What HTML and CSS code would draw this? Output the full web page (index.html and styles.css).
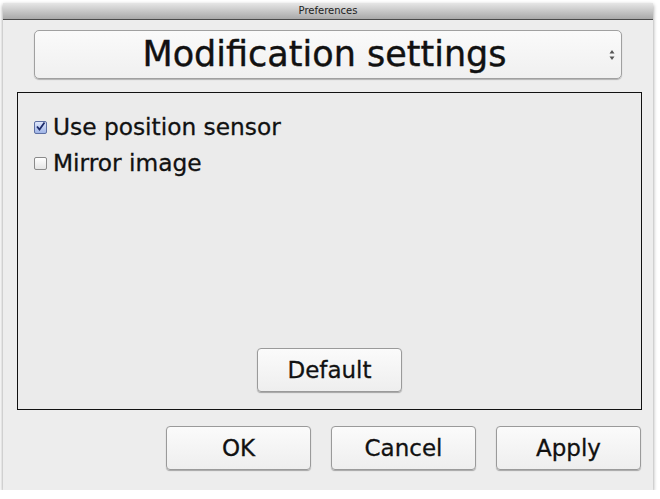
FILE: index.html
```html
<!DOCTYPE html>
<html lang="en">
<head>
  <meta charset="UTF-8">
  <title>Preferences</title>
  <link rel="stylesheet" href="styles.css">
</head>
<body>
  <div class="window">
    <div class="titlebar">Preferences</div>
    <div class="content">
      <!-- Category selector -->
      <div class="combo">
        <span class="combo-label">Modification settings</span>
        <svg class="combo-arrows" width="6" height="12" viewBox="0 0 6 12">
          <path d="M3 1 L5.5 4.5 L0.5 4.5 Z" fill="#555"/>
          <path d="M3 11 L5.5 7.5 L0.5 7.5 Z" fill="#555"/>
        </svg>
      </div>

      <!-- Settings panel -->
      <div class="panel">
        <label class="check">
          <span class="box checked">
            <svg width="13" height="13" viewBox="0 0 13 13">
              <path d="M3 6.5 L5.5 9.5 L10.5 2.5" fill="none" stroke="#1c2a6a" stroke-width="1.8"/>
            </svg>
          </span>
          Use position sensor
        </label>
        <label class="check">
          <span class="box"></span>
          Mirror image
        </label>
        <div class="panel-footer">
          <button class="btn">Default</button>
        </div>
      </div>

      <!-- Dialog buttons -->
      <div class="actions">
        <button class="btn">OK</button>
        <button class="btn">Cancel</button>
        <button class="btn">Apply</button>
      </div>
    </div>
  </div>
</body>
</html>
```

FILE: styles.css
```css
/* Basic reset */
body {
  margin: 0;
  background: #fff;
  font-family: "DejaVu Sans", sans-serif;
}
.window {
  margin: 3px 0 0 3px;
  width: 650px;
  height: 487px;
  background: #ededed;
  box-shadow: 0 2px 4px rgba(0,0,0,0.45);
  display: flex;
  flex-direction: column;
}
.titlebar {
  height: 16px;
  line-height: 16px;
  text-align: center;
  font-size: 10px;
  color: #222;
  background: linear-gradient(#e6e6e6, #a9a9a9);
  border-bottom: 1px solid #4a4a4a;
}
.content {
  flex: 1;
  padding: 10px 12px 0 14px;
  display: flex;
  flex-direction: column;
}
/* Combo box */
.combo {
  margin-left: 17px;
  width: 586px;
  height: 47px;
  border: 1px solid #a0a0a0;
  border-radius: 5px;
  background: linear-gradient(#fafafa, #f0f0f0);
  box-shadow: 0 1px 1px rgba(0,0,0,0.25);
  display: flex;
  align-items: center;
  position: relative;
}
.combo-label {
  flex: 1;
  text-align: center;
  font-size: 35px;
  color: #111;
  padding: 0 7px 2px 0;
  -webkit-text-stroke: 0.4px #111;
}
.combo-arrows {
  position: absolute;
  right: 6px;
  top: 18px;
}
/* Panel */
.panel {
  margin-top: 13px;
  width: 625px;
  height: 318px;
  border: 1px solid #111;
  background: #ebebeb;
  display: flex;
  flex-direction: column;
  padding: 0 0 0 16px;
  box-sizing: border-box;
}
.check {
  display: flex;
  align-items: center;
  font-size: 23.3px;
  color: #111;
  height: 36px;
  gap: 6px;
  -webkit-text-stroke: 0.3px #111;
}
.check:first-child {
  margin-top: 15px;
}
.box {
  width: 11px;
  height: 11px;
  border: 1px solid #8a8a8a;
  border-radius: 2px;
  background: linear-gradient(#fff, #e4e4e4);
  position: relative;
  margin-top: 2px;
}
.box.checked {
  border-color: #5d6fa3;
  background: linear-gradient(#dfe7fb, #9fb4e6);
}
.box svg {
  position: absolute;
  left: -1px;
  top: -2px;
}
.panel-footer {
  margin-top: auto;
  margin-bottom: 17px;
  display: flex;
  justify-content: center;
  padding-right: 16px;
}
/* Buttons */
.btn {
  font-family: "DejaVu Sans", sans-serif;
  font-size: 23px;
  color: #111;
  width: 145px;
  height: 44px;
  border: 1px solid #9a9a9a;
  border-radius: 4px;
  background: linear-gradient(#fbfbfb, #eeeeee);
  box-shadow: 0 1px 1px rgba(0,0,0,0.3);
  padding: 0;
  -webkit-text-stroke: 0.3px #111;
}
.actions {
  margin-top: 16px;
  display: flex;
  justify-content: flex-end;
  gap: 20px;
}
```
